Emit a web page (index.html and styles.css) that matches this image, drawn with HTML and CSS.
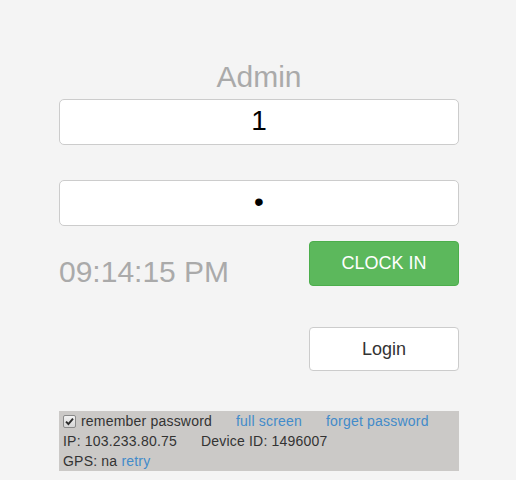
FILE: index.html
```html
<!DOCTYPE html>
<html>
<head>
<meta charset="utf-8">
<link rel="stylesheet" href="styles.css">
</head>
<body>
<div class="wrap">
  <div class="title">Admin</div>
  <input class="field" type="text" value="1">
  <input class="field pw" type="password" value="1">
  <div class="row">
    <div class="time">09:14:15 PM</div>
    <button class="btn btn-green">CLOCK IN</button>
  </div>
  <div class="row row-login">
    <button class="btn btn-white">Login</button>
  </div>
  <div class="footer">
    <div class="line">
      <span class="cb"><svg width="11" height="11" viewBox="0 0 11 11"><path d="M2 5.6 L4.4 8 L9 2.6" fill="none" stroke="#2b2b2b" stroke-width="1.9"/></svg></span><span>remember password</span><a class="lnk gap">full screen</a><a class="lnk gap">forget password</a>
    </div>
    <div class="line">
      <span>IP: 103.233.80.75</span><span class="gap">Device ID: 1496007</span>
    </div>
    <div class="line">
      <span>GPS: na <a class="lnk">retry</a></span>
    </div>
  </div>
</div>
</body>
</html>
```
FILE: styles.css
```css
html, body {
  margin: 0;
  padding: 0;
  background: #f4f4f4;
  font-family: "Liberation Sans", Arial, sans-serif;
}
.wrap {
  width: 400px;
  margin-left: 59px;
  padding-top: 61px;
  display: flex;
  flex-direction: column;
}
.title {
  font-size: 30px;
  line-height: 32px;
  color: #aaaaaa;
  text-align: center;
  margin-bottom: 6px;
}
.field {
  box-sizing: border-box;
  width: 400px;
  height: 46px;
  margin: 0;
  border: 1px solid #cccccc;
  border-radius: 5px;
  background: #ffffff;
  font-family: "Liberation Sans", Arial, sans-serif;
  font-size: 28px;
  color: #000;
  text-align: center;
  padding: 0 10px 2px;
  outline: none;
}
.pw {
  margin-top: 35px;
}
.row {
  display: flex;
  justify-content: space-between;
  align-items: flex-start;
  margin-top: 15px;
}
.row-login {
  justify-content: flex-end;
  margin-top: 40px;
}
.time {
  font-size: 30px;
  line-height: 30px;
  color: #aaaaaa;
  margin-top: 16px;
}
.btn {
  box-sizing: border-box;
  width: 150px;
  height: 45px;
  border-radius: 4px;
  font-family: "Liberation Sans", Arial, sans-serif;
  font-size: 18px;
  padding: 0;
  margin: 0;
}
.btn-green {
  background: #5cb85c;
  border: 1px solid #4cae4c;
  color: #ffffff;
}
.btn-white {
  height: 44px;
  background: #ffffff;
  border: 1px solid #cccccc;
  color: #333333;
}
.footer {
  margin-top: 40px;
  background: #cbc9c7;
  padding: 0 4px;
  font-size: 14px;
  line-height: 20px;
  letter-spacing: 0.2px;
  color: #333333;
}
.line {
  display: flex;
  align-items: center;
  height: 20px;
  white-space: pre;
}
.cb {
  box-sizing: border-box;
  width: 13px;
  height: 13px;
  border: 1px solid #8a8a8a;
  border-radius: 2px;
  background: linear-gradient(#f2f2f2, #d6d6d6);
  margin-right: 5px;
  display: flex;
  align-items: center;
  justify-content: center;
}
.cb svg {
  display: block;
}
.lnk {
  color: #428bca;
}
.gap {
  margin-left: 24px;
}
```
